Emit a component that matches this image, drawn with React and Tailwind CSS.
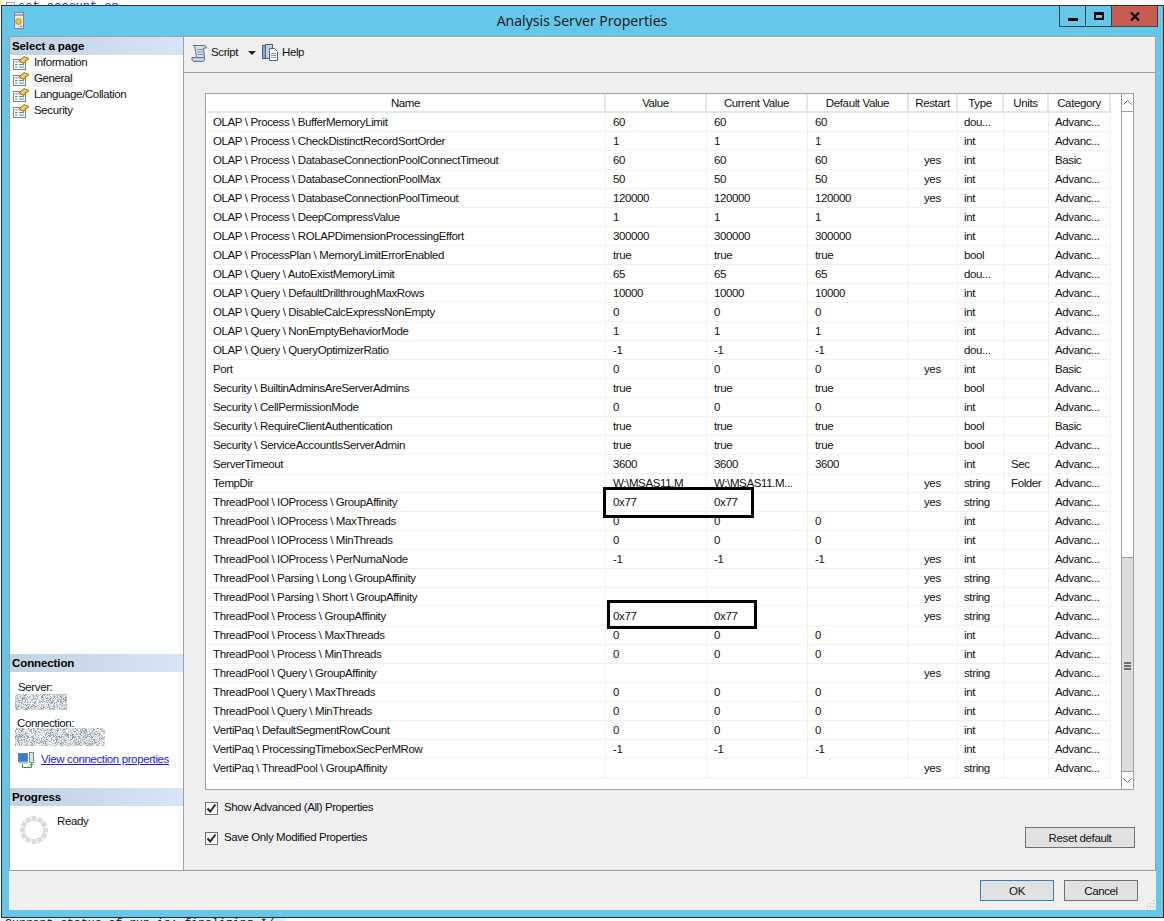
const F = "font-['Liberation_Sans',Arial,sans-serif] text-[11.5px] tracking-[-0.38px]";

const P = "OLAP \\ Process \\ ";
const Q = "OLAP \\ Query \\ ";
const S = "Security \\ ";
const T = "ThreadPool \\ ";
const V = "VertiPaq \\ ";
const A = "Advanc...";
const D = "dou...";
const same = (name, v, restart, type, units = "", cat = A) => [name, v, v, v, restart, type, units, cat];

const rows = [
  same(P + "BufferMemoryLimit", "60", "", D),
  same(P + "CheckDistinctRecordSortOrder", "1", "", "int"),
  same(P + "DatabaseConnectionPoolConnectTimeout", "60", "yes", "int", "", "Basic"),
  same(P + "DatabaseConnectionPoolMax", "50", "yes", "int"),
  same(P + "DatabaseConnectionPoolTimeout", "120000", "yes", "int"),
  same(P + "DeepCompressValue", "1", "", "int"),
  same(P + "ROLAPDimensionProcessingEffort", "300000", "", "int"),
  same("OLAP \\ ProcessPlan \\ MemoryLimitErrorEnabled", "true", "", "bool"),
  same(Q + "AutoExistMemoryLimit", "65", "", D),
  same(Q + "DefaultDrillthroughMaxRows", "10000", "", "int"),
  same(Q + "DisableCalcExpressNonEmpty", "0", "", "int"),
  same(Q + "NonEmptyBehaviorMode", "1", "", "int"),
  same(Q + "QueryOptimizerRatio", "-1", "", D),
  same("Port", "0", "yes", "int", "", "Basic"),
  same(S + "BuiltinAdminsAreServerAdmins", "true", "", "bool"),
  same(S + "CellPermissionMode", "0", "", "int"),
  same(S + "RequireClientAuthentication", "true", "", "bool", "", "Basic"),
  same(S + "ServiceAccountIsServerAdmin", "true", "", "bool"),
  same("ServerTimeout", "3600", "", "int", "Sec"),
  ["TempDir", "W:\\MSAS11.M", "W:\\MSAS11.M...", "", "yes", "string", "Folder", A],
  [T + "IOProcess \\ GroupAffinity", "0x77", "0x77", "", "yes", "string", "", A],
  same(T + "IOProcess \\ MaxThreads", "0", "", "int"),
  same(T + "IOProcess \\ MinThreads", "0", "", "int"),
  same(T + "IOProcess \\ PerNumaNode", "-1", "yes", "int"),
  [T + "Parsing \\ Long \\ GroupAffinity", "", "", "", "yes", "string", "", A],
  [T + "Parsing \\ Short \\ GroupAffinity", "", "", "", "yes", "string", "", A],
  [T + "Process \\ GroupAffinity", "0x77", "0x77", "", "yes", "string", "", A],
  same(T + "Process \\ MaxThreads", "0", "", "int"),
  same(T + "Process \\ MinThreads", "0", "", "int"),
  [T + "Query \\ GroupAffinity", "", "", "", "yes", "string", "", A],
  same(T + "Query \\ MaxThreads", "0", "", "int"),
  same(T + "Query \\ MinThreads", "0", "", "int"),
  same(V + "DefaultSegmentRowCount", "0", "", "int"),
  same(V + "ProcessingTimeboxSecPerMRow", "-1", "", "int"),
  [V + "ThreadPool \\ GroupAffinity", "", "", "", "yes", "string", "", A],
];

const headers = ["Name", "Value", "Current Value", "Default Value", "Restart", "Type", "Units", "Category"];
const COLS = "grid grid-cols-[399px_101px_101px_101px_49px_46px_45px_62px]";
const PAD = ["pl-[6px]", "pl-[7px]", "pl-[7px]", "pl-[7px]", "pl-[15px]", "pl-[6px]", "pl-[7px]", "pl-[6px]"];

function PageIcon() {
  return (
    <svg width="17" height="16" viewBox="0 0 17 16" className="shrink-0">
      <rect x="0.500" y="4.500" width="12" height="10" fill="#fff" stroke="#75869c" />
      <path d="M2 7h2.500M2 9.500h2.500M2 12h2.500M6 9.500h5M6 12h5" stroke="#6482a8" strokeWidth="1" />
      <path d="M5.500 6.500 L11 1.500 L16 3.500 L11 8.500 Z" fill="#e2b93b" stroke="#7d6518" strokeWidth="0.800" />
      <path d="M9 6l3-3" stroke="#fff2b0" strokeWidth="1" />
    </svg>
  );
}

function ScriptIcon() {
  return (
    <svg width="17" height="19" viewBox="0 0 17 19">
      <path d="M2 1.500h11c1.500 0 2.500 1 2.500 2.500h-3l1 9.500H5.500L4 4c-.200-1.500-1-2.500-2-2.500Z" fill="#d5deea" stroke="#5c7390" strokeWidth="1" />
      <path d="M1 13.500h12.500c.500 2-.500 4-2 4H3c-1.500 0-2.500-2-2-4Z" fill="#c3d0e0" stroke="#5c7390" strokeWidth="1" />
      <path d="M6 5.500h6M6.300 8h6M6.600 10.500h6" stroke="#7d93ad" strokeWidth="1" />
    </svg>
  );
}

function HelpIcon() {
  return (
    <svg width="17" height="18" viewBox="0 0 17 18">
      <rect x="0.500" y="1.500" width="8" height="13" fill="#8ea6c6" stroke="#4f6482" />
      <rect x="3.500" y="0.500" width="7" height="14" fill="#c3d2e6" stroke="#4f6482" />
      <path d="M7.500 4.500h5l3 3v9h-8Z" fill="#fff" stroke="#4f6482" />
      <path d="M9 9.500h5M9 11.500h5M9 13.500h5" stroke="#8595ab" />
    </svg>
  );
}

function Noise({ w, h, seed }) {
  const cells = [];
  let s = seed;
  const cs = ["#ffffff", "#e4e8ee", "#c9ced8", "#aab2c0", "#dfe6d8", "#8d95a8", "#f0ece2", "#bfc9d8"];
  for (let y = 0; y < h; y++) {
    for (let x = 0; x < w; x++) {
      s = (s * 1103515245 + 12345) & 0x7fffffff;
      cells.push(<rect key={x + "-" + y} x={x} y={y} width="1" height="1" fill={cs[(s >> 16) % cs.length]} />);
    }
  }
  return <svg width={w} height={h} className="block">{cells}</svg>;
}

function Spinner() {
  const dots = [];
  for (let i = 0; i < 12; i++) {
    dots.push(<line key={i} x1="15" y1="1" x2="15" y2="6" stroke="#dcdcdc" strokeWidth="5" transform={`rotate(${i * 30} 15 15)`} />);
  }
  return <svg width="30" height="30" viewBox="0 0 30 30" className="shrink-0">{dots}</svg>;
}

function ConnIcon() {
  return (
    <svg width="17" height="17" viewBox="0 0 17 17" className="shrink-0">
      <rect x="0.500" y="1.500" width="9" height="8" fill="#2f7fe0" stroke="#6c7f96" />
      <rect x="1" y="9.500" width="9" height="2" fill="#aab6c4" />
      <rect x="11.500" y="0.500" width="4" height="10" fill="#dfe4ea" stroke="#7d8896" />
      <path d="M4.500 12v3.500h9V11.500M11.800 13.500l1.700-2 1.700 2" fill="none" stroke="#2f9a2f" strokeWidth="1" />
    </svg>
  );
}

function SideHeader({ children }) {
  return (
    <div className="h-[18px] flex items-center pl-[2px] pt-[2px] font-bold tracking-[-0.1px] text-black bg-gradient-to-r from-[#c3d2e2] to-[#d6e4f5]">
      {children}
    </div>
  );
}

function CheckBox({ label }) {
  return (
    <div className="flex items-center gap-[6px] h-[13px]">
      <span className="w-[13px] h-[13px] border border-[#707070] bg-white flex items-center justify-center">
        <svg width="11" height="11" viewBox="0 0 11 11"><path d="M1.500 5.500l2.700 3 5.300-7" fill="none" stroke="#222" strokeWidth="2" /></svg>
      </span>
      <span className="text-[#111] -mt-[2px] tracking-[-0.42px]">{label}</span>
    </div>
  );
}

function Btn({ children, className = "" }) {
  return (
    <div className={"h-[21px] flex items-center justify-center pt-[2px] bg-[#e1e1e1] border border-[#707070] text-[#111] " + className}>
      {children}
    </div>
  );
}

export default function App() {
  return (
    <div className={"relative w-[1164px] h-[921px] overflow-hidden bg-white flex flex-col " + F}>
      <div className="h-[5px] overflow-hidden bg-white flex">
        <div className="w-[2px] bg-[#f5ee8a]" />
        <div className="ml-[4px] mt-[2px] w-[9px] h-[9px] border border-[#a8a8a8]" />
        <div className="pl-[3px] mt-[1px] font-['Liberation_Mono',monospace] text-[12px] leading-[12px] tracking-normal text-[#1c2fd0]">set_account_on</div>
      </div>

      <div className="ml-[1px] w-[1163px] h-[913px] border border-[#2b3033] bg-[#65c8ea] flex flex-col">
        <div className="h-[30px] flex items-start shrink-0">
          <div className="w-[103px] pl-[12px] pt-[6px] shrink-0">
            <svg width="10" height="17" viewBox="0 0 10 17">
              <rect x="0.500" y="0.500" width="9" height="16" fill="#e8e8e8" stroke="#7a84a0" />
              <rect x="1" y="2" width="8" height="2" fill="#a8a8a8" />
              <circle cx="4.500" cy="9.500" r="3" fill="#e6c51e" stroke="#8c7a10" strokeWidth="0.500" />
              <rect x="6" y="14" width="2" height="1" fill="#3aa03a" />
            </svg>
          </div>
          <div className="flex-1 text-center font-['Noto_Sans',sans-serif] text-[14px] tracking-normal leading-[30px] text-[#1c1c1c]">Analysis Server Properties</div>
          <div className="mr-[5px] h-[21px] flex border-x border-b border-[#3c4144]">
            <div className="w-[26px] border-r border-[#3c4144] flex items-center justify-center pt-[7px]">
              <div className="w-[10px] h-[3px] bg-black" />
            </div>
            <div className="w-[26px] border-r border-[#3c4144] flex items-center justify-center">
              <div className="w-[10px] h-[8px] border-2 border-t-[3px] border-black" />
            </div>
            <div className="w-[45px] bg-[#c75c50] flex items-center justify-center">
              <svg width="10" height="9" viewBox="0 0 10 9"><path d="M1 0.500l8 8M9 0.500l-8 8" stroke="#111" strokeWidth="2.400" /></svg>
            </div>
          </div>
        </div>

        <div className="mx-[7px] h-[874px] flex flex-col bg-[#efefef] border-t border-[#a0a0a0]">
          <div className="h-[834px] flex border-l border-r border-[#a0a0a0] border-b">
            <aside className="w-[174px] shrink-0 bg-white border-r border-[#a0a0a0] flex flex-col">
              <SideHeader>Select a page</SideHeader>
              {["Information", "General", "Language/Collation", "Security"].map((t, i) => (
                <div key={t} className="h-[16px] flex items-center pl-[3px] text-[#111]">
                  <PageIcon />
                  <span className={"ml-[2px] px-[2px] h-[16px] leading-[14px] " + (i === 1 ? "bg-[#efefef]" : "")}>{t}</span>
                </div>
              ))}
              <div className="flex-1" />
              <div className="h-[134px]">
                <SideHeader>Connection</SideHeader>
                <div className="pl-[5px] pt-[8px] text-[#111] flex flex-col">
                  <span className="pl-[3px] leading-[14px]">Server:</span>
                  <Noise w={52} h={16} seed={7} />
                  <span className="pl-[2px] mt-[6px] leading-[14px]">Connection:</span>
                  <div className="-mt-[2px]"><Noise w={90} h={18} seed={19} /></div>
                  <div className="flex items-center mt-[6px] pl-[3px]">
                    <ConnIcon />
                    <span className="ml-[6px] -mt-[2px] text-[#1a1ae6] underline whitespace-nowrap">View connection properties</span>
                  </div>
                </div>
              </div>
              <div className="h-[82px]">
                <SideHeader>Progress</SideHeader>
                <div className="flex pl-[9px] pt-[9px] text-[#111]">
                  <Spinner />
                  <span className="ml-[8px] -mt-[1px] leading-[14px]">Ready</span>
                </div>
              </div>
            </aside>

            <main className="flex-1 flex flex-col border-t border-white">
              <div className="h-[35px] shrink-0 border-b border-[#a0a0a0] flex items-center pl-[7px] pb-[4px] text-[#111]">
                <ScriptIcon />
                <span className="ml-[3px] w-[27px]">Script</span>
                <svg width="8" height="4" viewBox="0 0 8 4" className="ml-[10px]"><path d="M0 0h8L4 4Z" fill="#222" /></svg>
                <span className="ml-[6px] flex"><HelpIcon /></span>
                <span className="ml-[3px]">Help</span>
              </div>

              <div className="pl-[21px] pt-[20px] flex-1 flex flex-col">
                <div className="w-[929px] h-[697px] border border-[#a0a0a0] bg-white flex text-[#111]">
                  <div className="w-[910px] pl-[1px] shrink-0">
                    <div className={COLS + " h-[19px]"}>
                      {headers.map((h) => (
                        <div key={h} className="border-r-2 border-b-2 border-[#e6e6e6] flex items-center justify-center leading-[16px]">{h}</div>
                      ))}
                    </div>
                    {rows.map((r, i) => (
                      <div key={i} className={COLS + " h-[19px]"}>
                        {r.map((c, j) => (
                          <div key={j} className={"border-r border-b border-[#f0f0f0] flex items-center pt-[2px] overflow-hidden whitespace-nowrap " + PAD[j]}>{c}</div>
                        ))}
                      </div>
                    ))}
                  </div>
                  <div className="ml-[5px] flex-1 flex flex-col border-l border-[#a0a0a0]">
                    <div className="h-[18px] border-b border-[#a0a0a0] flex items-center justify-center">
                      <svg width="9" height="5" viewBox="0 0 9 5"><path d="M0.500 4.500l4-4 4 4" fill="none" stroke="#6a6a6a" /></svg>
                    </div>
                    <div className="flex-1" />
                    <div className="h-[214px] bg-[#dcdcdc] border-t border-[#a0a0a0] flex items-center justify-center pt-[3px]">
                      <div className="w-[7px] h-[8px] border-y-2 border-[#6f6f6f] flex items-center"><div className="w-full h-[2px] bg-[#6f6f6f]" /></div>
                    </div>
                    <div className="h-[18px] border-t border-[#a0a0a0] flex items-center justify-center">
                      <svg width="9" height="5" viewBox="0 0 9 5"><path d="M0.500 0.500l4 4 4-4" fill="none" stroke="#6a6a6a" /></svg>
                    </div>
                  </div>
                </div>
                <div className="flex mt-[12px]">
                  <div className="flex flex-col gap-[17px]">
                    <CheckBox label="Show Advanced (All) Properties" />
                    <CheckBox label="Save Only Modified Properties" />
                  </div>
                  <Btn className="w-[110px] ml-auto mr-[20px] mt-[25px]">Reset default</Btn>
                </div>
              </div>
            </main>
          </div>
          <div className="flex-1 flex justify-end items-start pt-[9px] pr-[18px] gap-[10px] relative">
            <Btn className="w-[74px] !border-[#3c7fb1]">OK</Btn>
            <Btn className="w-[74px]">Cancel</Btn>
            <svg width="8" height="8" viewBox="0 0 8 8" className="absolute right-[1px] bottom-[2px]"><path d="M6 0h1v1H6zM3 3h1v1H3zM6 3h1v1H6zM0 6h1v1H0zM3 6h1v1H3zM6 6h1v1H6z" fill="#b0b0b0" /></svg>
          </div>
        </div>
      </div>

      <div className="h-[3px] overflow-hidden">
        <div className="w-[285px] bg-[#e5edf5] font-['Liberation_Mono',monospace] text-[11.500px] tracking-normal leading-[12px] -mt-[1px] text-[#111] pl-[5px] whitespace-nowrap">Current status of run is: finalizing */</div>
      </div>

      <div className="absolute left-[603px] top-[487px] w-[151px] h-[31px] border-[3px] border-black" />
      <div className="absolute left-[607px] top-[600px] w-[150px] h-[29px] border-[3px] border-black" />
    </div>
  );
}
